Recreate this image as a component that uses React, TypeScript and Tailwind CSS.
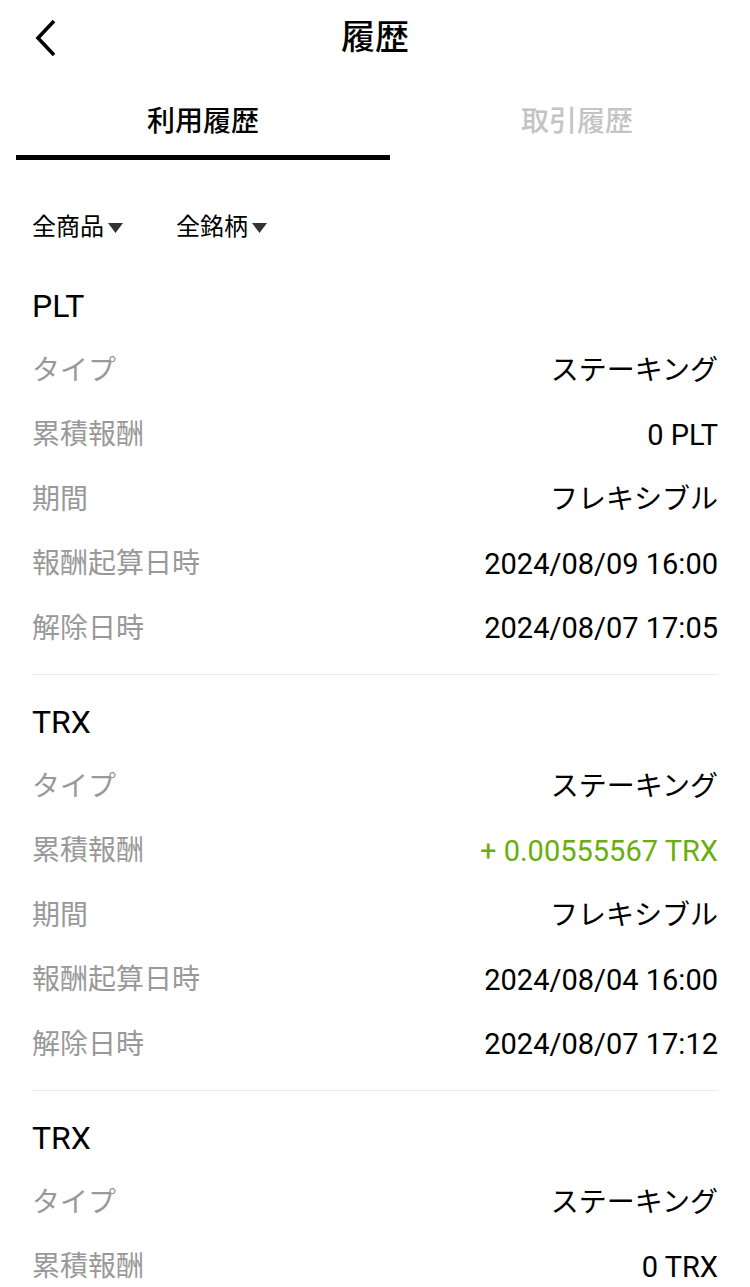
import React from 'react'

type Row = { label: string; value: string; green?: boolean; latin?: boolean }
type Record = { coin: string; rows: Row[] }

const records: Record[] = [
  {
    coin: 'PLT',
    rows: [
      { label: 'タイプ', value: 'ステーキング' },
      { label: '累積報酬', value: '0 PLT', latin: true },
      { label: '期間', value: 'フレキシブル' },
      { label: '報酬起算日時', value: '2024/08/09 16:00', latin: true },
      { label: '解除日時', value: '2024/08/07 17:05', latin: true },
    ],
  },
  {
    coin: 'TRX',
    rows: [
      { label: 'タイプ', value: 'ステーキング' },
      { label: '累積報酬', value: '+ 0.00555567 TRX', green: true, latin: true },
      { label: '期間', value: 'フレキシブル' },
      { label: '報酬起算日時', value: '2024/08/04 16:00', latin: true },
      { label: '解除日時', value: '2024/08/07 17:12', latin: true },
    ],
  },
  {
    coin: 'TRX',
    rows: [
      { label: 'タイプ', value: 'ステーキング' },
      { label: '累積報酬', value: '0 TRX', latin: true },
      { label: '期間', value: 'フレキシブル' },
      { label: '報酬起算日時', value: '2024/08/04 16:00', latin: true },
      { label: '解除日時', value: '2024/08/07 17:12', latin: true },
    ],
  },
]

function Caret() {
  return (
    <svg width="15" height="10" viewBox="0 0 15 10" className="ml-[4px] mt-[1px]">
      <path d="M0 0 L15 0 L7.5 10 Z" fill="#333333" />
    </svg>
  )
}

function RecordCard({ record, first }: { record: Record; first: boolean }) {
  return (
    <div className={first ? '' : 'pt-[16px]'}>
      <div className="mx-[32px] border-b border-[#ebebeb] pb-[14.5px]">
        <div className="h-[62px] flex items-center text-[32px] text-black">{record.coin}</div>
        {record.rows.map((r, i) => (
          <div key={i} className="h-[64.5px] flex items-center justify-between pt-[3px]">
            <span className="text-[28px] text-[#999999]">{r.label}</span>
            <span
              className={
                (r.latin ? 'text-[29px] ' : 'text-[28px] ') +
                (r.green ? 'text-[#6aae0e]' : 'text-black')
              }
            >
              {r.value}
            </span>
          </div>
        ))}
      </div>
    </div>
  )
}

export default function App() {
  return (
    <div
      className="w-[750px] h-[1287px] overflow-hidden bg-white"
      style={{ fontFamily: 'Roboto, "Noto Sans CJK JP", sans-serif' }}
    >
      {/* Header */}
      <div className="relative h-[76px] flex items-center justify-center">
        <button className="absolute left-[34px] top-[19px]">
          <svg width="24" height="38" viewBox="0 0 24 38" fill="none">
            <path d="M20 2 L4 19 L20 36" stroke="#000" strokeWidth="3.6" strokeLinecap="butt" />
          </svg>
        </button>
        <h1 className="text-[34px] font-medium text-black -mt-[2px]">履歴</h1>
      </div>

      {/* Tabs */}
      <div className="flex pl-[16px] overflow-hidden h-[84px]">
        <div className="w-[374px] shrink-0 flex flex-col">
          <div className="flex-1 flex items-center justify-center pt-[12px] text-[28px] font-medium text-black">
            利用履歴
          </div>
          <div className="h-[5px] bg-black" />
        </div>
        <div className="w-[374px] shrink-0 flex flex-col">
          <div className="flex-1 flex items-center justify-center pt-[12px] text-[28px] font-medium text-[#c4c4c4]">
            取引履歴
          </div>
          <div className="h-[5px]" />
        </div>
      </div>

      {/* Filters */}
      <div className="pt-[47px] pb-[28px] px-[32px] flex gap-[53px]">
        <div className="h-[40px] flex items-center text-[24px] text-black">
          全商品
          <Caret />
        </div>
        <div className="h-[40px] flex items-center text-[24px] text-black">
          全銘柄
          <Caret />
        </div>
      </div>

      {records.map((r, i) => (
        <RecordCard key={i} record={r} first={i === 0} />
      ))}
    </div>
  )
}
